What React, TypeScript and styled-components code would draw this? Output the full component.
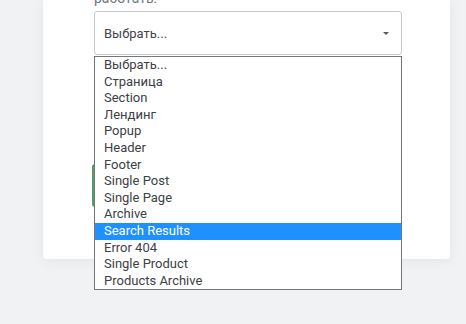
import React from 'react';
import styled, {createGlobalStyle} from 'styled-components';

const GlobalStyle = createGlobalStyle`
    html, body {
        margin: 0;
        padding: 0;
        background-color: #f1f2f4;
        font-family: Roboto, "Liberation Sans", Arial, sans-serif;
    }
`;

const options = [
    'Выбрать...',
    'Страница',
    'Section',
    'Лендинг',
    'Popup',
    'Header',
    'Footer',
    'Single Post',
    'Single Page',
    'Archive',
    'Search Results',
    'Error 404',
    'Single Product',
    'Products Archive'
];

const App: React.FunctionComponent = () => {
    const [active, setActive] = React.useState(10);
    return (
        <>
            <GlobalStyle/>
            <Page>
                <Card>
                    <Label>Выберите тип шаблона, с которым вы хотите работать:</Label>
                    <SelectBox>
                        <span>{options[0]}</span>
                        <Arrow/>
                    </SelectBox>
                    <CreateButton type="button" aria-label="Создать шаблон"/>
                    <OptionList>
                        {options.map((option, index) => (
                            <Option key={option} $active={index === active} onMouseEnter={() => setActive(index)}>
                                {option}
                            </Option>
                        ))}
                    </OptionList>
                </Card>
            </Page>
        </>
    );
}

const Page = styled.div`
    position: relative;
    width: 466px;
    height: 324px;
    overflow: hidden;
`;

const Card = styled.div`
    position: relative;
    margin-left: 43px;
    width: 407px;
    height: 259px;
    box-sizing: border-box;
    padding: 0 48px 0 51px;
    background-color: #fff;
    border-radius: 0 0 4px 4px;
    box-shadow: 0 2px 14px rgba(0, 0, 0, 0.06);
    display: flex;
    flex-direction: column;
`;

const Label = styled.div`
    margin-top: -32px;
    height: 40px;
    font-size: 14px;
    line-height: 20px;
    color: #6d7882;
`;

const SelectBox = styled.div`
    margin-top: 3px;
    height: 44px;
    box-sizing: border-box;
    border: 1px solid #c5c9ce;
    border-radius: 3px;
    padding: 0 12px 0 9px;
    display: flex;
    align-items: center;
    justify-content: space-between;
    font-size: 13px;
    color: #3e4349;
`;

const Arrow = styled.span`
    width: 0;
    height: 0;
    border-left: 3px solid transparent;
    border-right: 3px solid transparent;
    border-top: 3px solid #55595e;
`;

const CreateButton = styled.button`
    margin-top: 109px;
    margin-left: -2px;
    width: 160px;
    height: 43px;
    border: none;
    border-radius: 3px;
    background-color: #5a9a68;
`;

const OptionList = styled.div`
    position: absolute;
    top: 56px;
    left: 51px;
    width: 308px;
    box-sizing: border-box;
    border: 1px solid #767676;
    background-color: #fff;
    font-size: 13px;
`;

const Option = styled.div<{$active: boolean}>`
    height: 16.6px;
    line-height: 16.6px;
    padding-left: 9px;
    color: ${props => props.$active ? '#fff' : '#3c4146'};
    background-color: ${props => props.$active ? '#1e90ff' : 'transparent'};
    white-space: nowrap;
    cursor: default;
`;

export default App;
